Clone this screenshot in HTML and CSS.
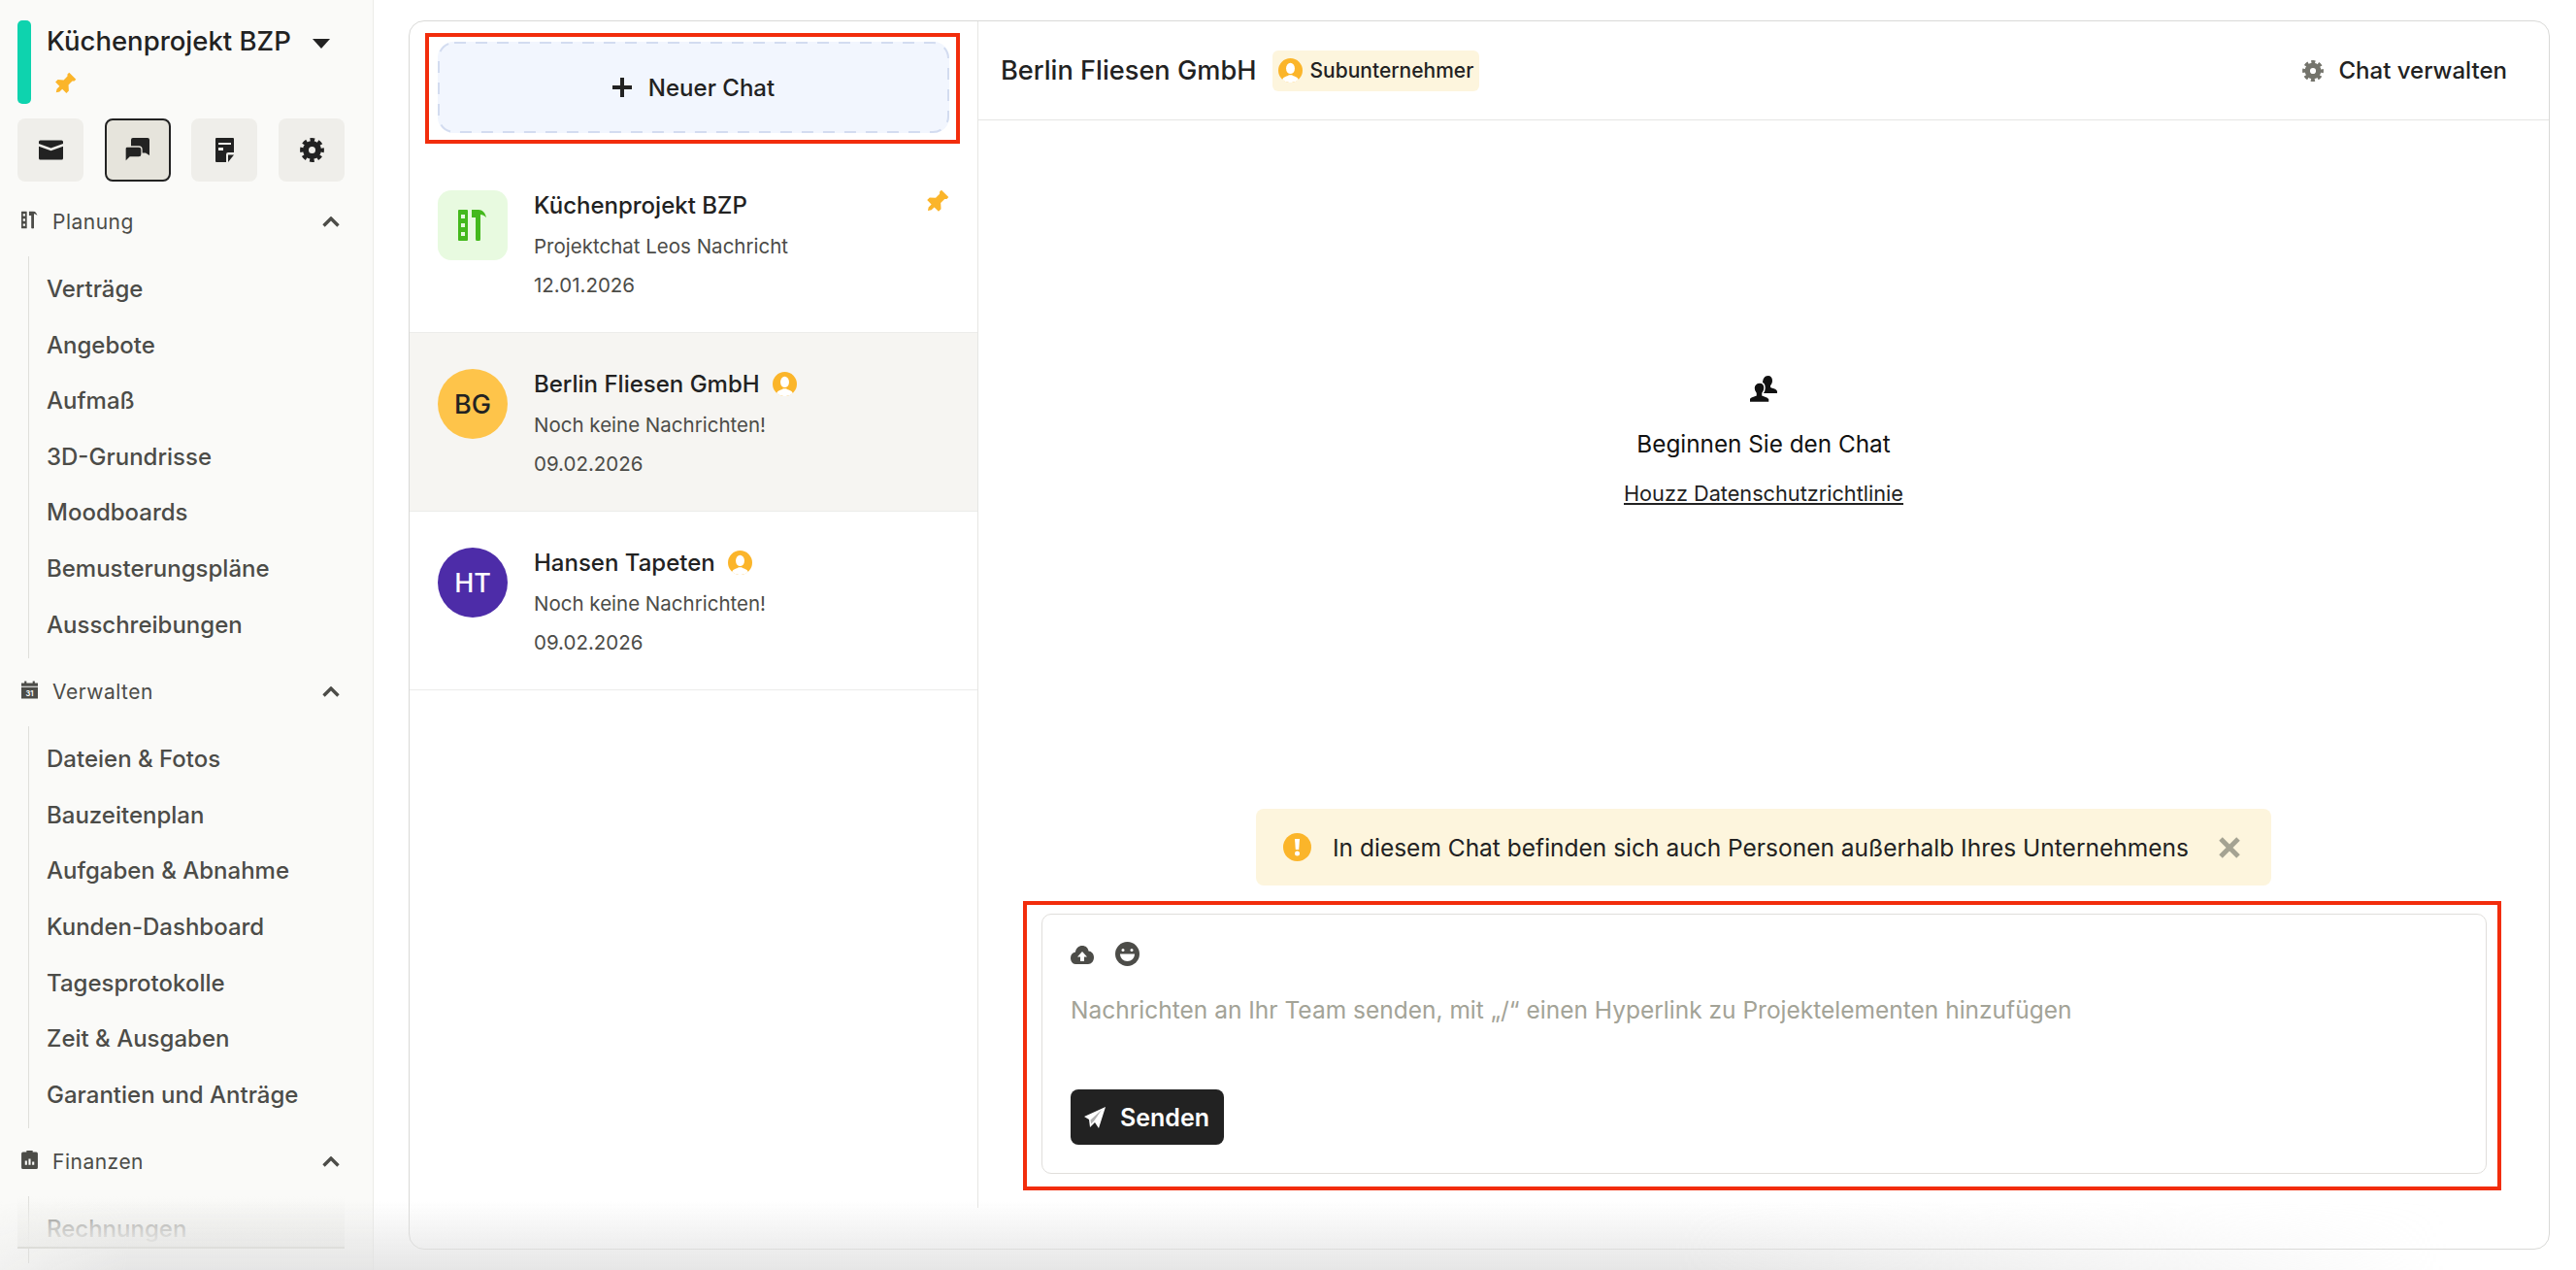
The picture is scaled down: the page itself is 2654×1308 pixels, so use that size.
FILE: index.html
```html
<!DOCTYPE html>
<html lang="de">
<head>
    <meta charset="UTF-8">
    <title>Küchenprojekt BZP - Chat</title>
    <link rel="stylesheet" href="styles.css">
</head>
<body>
    <svg class="defs" width="0" height="0">
        <symbol id="i-gear" viewBox="0 0 25 25">
            <circle cx="12.5" cy="12.5" r="6.5" fill="none" stroke="currentColor" stroke-width="6"/>
            <circle cx="12.5" cy="12.5" r="10.4" fill="none" stroke="currentColor" stroke-width="4" stroke-dasharray="4.6 3.57" stroke-dashoffset="2.3"/>
        </symbol>
        <symbol id="i-pin" viewBox="0 0 24 24">
            <path fill="#fbb52a" transform="rotate(45 12 12)" d="M7 1h10v2.500L15.500 5v5.500l4.500 4V18h-6v4l-2 3-2-3v-4H4v-3.500l4.500-4V5L7 3.500z"/>
        </symbol>
        <symbol id="i-user" viewBox="0 0 24 24">
            <circle cx="12" cy="12" r="12" fill="#fbb52a"/>
            <ellipse cx="12" cy="10" rx="4.300" ry="5.400" fill="#fff"/>
            <path fill="#fff" d="M4 21c1-3 5-3 6.500-4.500h3C15 18 19 18 20 21a12 12 0 0 1-16 0z"/>
        </symbol>
        <symbol id="i-tools" viewBox="0 0 30 32">
            <path fill="currentColor" fill-rule="evenodd" d="M1 0h8a1 1 0 0 1 1 1v30a1 1 0 0 1-1 1H1a1 1 0 0 1-1-1V1a1 1 0 0 1 1-1zM3 5v4h4V5zm0 9v4h4v-4zm0 9v4h4v-4z"/>
            <path fill="currentColor" d="M14 0h7c4 0 7 3 8 8-2-2-4-3-6-3v25a2.500 2.500 0 0 1-5 0V8h-4z"/>
        </symbol>
        <symbol id="i-chevron" viewBox="0 0 18 11">
            <path fill="none" stroke="currentColor" stroke-width="3.400" d="M1.500 9.500L9 2l7.500 7.500"/>
        </symbol>
    </svg>

    <aside class="sidebar">
        <div class="project">
            <span class="project-bar"></span>
            <div class="project-info">
                <div class="project-name">
                    <span>Küchenprojekt BZP</span>
                    <svg class="caret" viewBox="0 0 18 10"><path fill="currentColor" d="M0 0h18L9 10z"/></svg>
                </div>
                <svg class="project-pin"><use href="#i-pin"/></svg>
            </div>
        </div>

        <div class="tabs">
            <button class="tab">
                <svg viewBox="0 0 25 20"><path fill="currentColor" d="M1.500 0h22A1.500 1.500 0 0 1 25 1.500v2L12.500 8 0 3.500v-2A1.500 1.500 0 0 1 1.500 0zM0 6.200l12.500 4.500L25 6.200v12.300a1.500 1.500 0 0 1-1.500 1.500h-22A1.500 1.500 0 0 1 0 18.500z"/></svg>
            </button>
            <button class="tab active">
                <svg viewBox="0 0 25 25"><path fill="currentColor" d="M8 0h15a2 2 0 0 1 2 2v16l-4-2.500H8a2 2 0 0 1-2-2V2a2 2 0 0 1 2-2z"/><path fill="currentColor" stroke="#e6e4dc" stroke-width="1.300" d="M2 9h12a3 3 0 0 1 3 3v5a3 3 0 0 1-3 3H5l-5 5V11a2 2 0 0 1 2-2z"/></svg>
            </button>
            <button class="tab">
                <svg viewBox="0 0 19 25"><path fill="currentColor" fill-rule="evenodd" d="M1 0h17a1 1 0 0 1 1 1v14h-6a2 2 0 0 0-2 2v8H1a1 1 0 0 1-1-1V1a1 1 0 0 1 1-1zm2 5v2h13V5zm0 5v3h5v-3z"/><path fill="currentColor" d="M13 17.500h6L13 25z"/></svg>
            </button>
            <button class="tab">
                <svg class="tab-gear"><use href="#i-gear"/></svg>
            </button>
        </div>

        <div class="nav-group">
            <div class="nav-head">
                <svg class="nav-icon" viewBox="0 0 30 32"><use href="#i-tools"/></svg>
                <span class="nav-label">Planung</span>
                <svg class="chevron"><use href="#i-chevron"/></svg>
            </div>
            <ul class="nav-list">
                <li>Verträge</li>
                <li>Angebote</li>
                <li>Aufmaß</li>
                <li>3D-Grundrisse</li>
                <li>Moodboards</li>
                <li>Bemusterungspläne</li>
                <li>Ausschreibungen</li>
            </ul>
        </div>

        <div class="nav-group">
            <div class="nav-head">
                <svg class="nav-icon" viewBox="0 0 16 17"><path fill="currentColor" d="M3 0h2v2h6V0h2v2h3v3H0V2h3zM0 6h16v11H0z"/><text x="8" y="14.500" class="cal-num">31</text></svg>
                <span class="nav-label">Verwalten</span>
                <svg class="chevron"><use href="#i-chevron"/></svg>
            </div>
            <ul class="nav-list">
                <li>Dateien &amp; Fotos</li>
                <li>Bauzeitenplan</li>
                <li>Aufgaben &amp; Abnahme</li>
                <li>Kunden-Dashboard</li>
                <li>Tagesprotokolle</li>
                <li>Zeit &amp; Ausgaben</li>
                <li>Garantien und Anträge</li>
            </ul>
        </div>

        <div class="nav-group">
            <div class="nav-head">
                <svg class="nav-icon" viewBox="0 0 16 18"><path fill="currentColor" fill-rule="evenodd" d="M5 0h6v1.500h3.500A1.500 1.500 0 0 1 16 3v13.500a1.500 1.500 0 0 1-1.500 1.500h-13A1.500 1.500 0 0 1 0 16.500V3a1.500 1.500 0 0 1 1.500-1.500H5zM3.500 10v4h2v-4zm3.500-2v6h2V8zm3.500 3v3h2v-3z"/></svg>
                <span class="nav-label">Finanzen</span>
                <svg class="chevron"><use href="#i-chevron"/></svg>
            </div>
            <ul class="nav-list">
                <li>Rechnungen</li>
            </ul>
        </div>

        <div class="sidebar-fade"></div>
    </aside>

    <main class="main">
        <div class="panel">
            <section class="chat-list">
                <div class="new-chat-wrap">
                    <button class="new-chat">
                        <svg class="dash" viewBox="0 0 527 94"><rect x="1" y="1" width="525" height="92" rx="16" ry="16"/></svg>
                        <svg class="plus" viewBox="0 0 20 20"><path fill="currentColor" d="M8 0h4v8h8v4h-8v8H8v-8H0V8h8z"/></svg>
                        <span>Neuer Chat</span>
                    </button>
                </div>

                <div class="chat-item">
                    <div class="avatar avatar-project">
                        <svg viewBox="0 0 30 32"><use href="#i-tools"/></svg>
                    </div>
                    <div class="chat-text">
                        <div class="chat-title">Küchenprojekt BZP</div>
                        <div class="chat-sub">Projektchat Leos Nachricht</div>
                        <div class="chat-date">12.01.2026</div>
                    </div>
                    <svg class="item-pin"><use href="#i-pin"/></svg>
                </div>

                <div class="chat-item selected">
                    <div class="avatar avatar-yellow">BG</div>
                    <div class="chat-text">
                        <div class="chat-title">Berlin Fliesen GmbH <svg class="user-icon"><use href="#i-user"/></svg></div>
                        <div class="chat-sub">Noch keine Nachrichten!</div>
                        <div class="chat-date">09.02.2026</div>
                    </div>
                </div>

                <div class="chat-item">
                    <div class="avatar avatar-purple">HT</div>
                    <div class="chat-text">
                        <div class="chat-title">Hansen Tapeten <svg class="user-icon"><use href="#i-user"/></svg></div>
                        <div class="chat-sub">Noch keine Nachrichten!</div>
                        <div class="chat-date">09.02.2026</div>
                    </div>
                </div>
            </section>

            <section class="chat-view">
                <header class="chat-head">
                    <h2>Berlin Fliesen GmbH</h2>
                    <span class="role-badge"><svg class="user-icon"><use href="#i-user"/></svg>Subunternehmer</span>
                    <a class="manage">
                        <svg class="manage-gear"><use href="#i-gear"/></svg>
                        <span>Chat verwalten</span>
                    </a>
                </header>

                <div class="chat-body">
                    <svg class="people" viewBox="0 0 28 27">
                        <path fill="#111" d="M18.500 0c3 0 4.500 2 4.500 5 0 2.500-1 4-2 5v2c2 1 6 1 7 4v2H14v-6c-1-2-1-3-1-4 0-5 2-8 5.500-8z"/>
                        <path fill="#111" stroke="#fff" stroke-width="1.500" d="M10 7c3.500 0 5 2.500 5 5.500 0 2.500-1 4.500-2 5.500v2c2 1 6 1.500 7 4v3.500H-1V24c1-2.500 5-3 7-4v-2c-1-1-2-3-2-5.500C4 9.500 6.500 7 10 7z"/>
                    </svg>
                    <div class="empty-title">Beginnen Sie den Chat</div>
                    <a class="privacy">Houzz Datenschutzrichtlinie</a>
                </div>

                <div class="notice">
                    <svg class="notice-icon" viewBox="0 0 29 29"><circle cx="14.500" cy="14.500" r="14.500" fill="#fbb52a"/><path fill="#fff" d="M12 6h5l-.8 11h-3.400z"/><circle cx="14.500" cy="21" r="2.500" fill="#fff"/></svg>
                    <span>In diesem Chat befinden sich auch Personen außerhalb Ihres Unternehmens</span>
                    <svg class="notice-close" viewBox="0 0 22 22"><path fill="none" stroke="currentColor" stroke-width="5" d="M2 2l18 18M20 2L2 20"/></svg>
                </div>

                <div class="composer">
                    <div class="composer-tools">
                        <svg class="tool-cloud" viewBox="0 0 24 20"><path fill="#4c4c48" d="M12 0c3.500 0 6 2.200 6.500 5.500 3 .3 5.500 2.600 5.500 6.500 0 4-2.500 7-6 7H5c-3 0-5-3-5-6.500C0 9.500 2 7 5 6.500 5.500 2.500 8.500 0 12 0z"/><path fill="#fff" d="M12 6l5 5.500h-3V16h-4v-4.500H7z"/></svg>
                        <svg class="tool-smile" viewBox="0 0 25 25"><circle cx="12.500" cy="12.500" r="12.500" fill="#4c4c48"/><circle cx="8" cy="8.500" r="1.500" fill="#fff"/><circle cx="17" cy="8.500" r="1.500" fill="#fff"/><path fill="#fff" d="M5 12.500h15c0 4.500-3.500 7.500-7.500 7.500S5 17 5 12.500z"/></svg>
                    </div>
                    <div class="composer-input">Nachrichten an Ihr Team senden, mit „/“ einen Hyperlink zu Projektelementen hinzufügen</div>
                    <button class="send">
                        <svg viewBox="0 0 22 22"><path fill="#fff" d="M22 0L15 22l-4-6-5 5-1-8-5-3z"/><path fill="#222" d="M18 3L6.500 13.500l.7 4 3.300-3.500z" opacity=".35"/></svg>
                        <span>Senden</span>
                    </button>
                </div>
            </section>
        </div>
        <div class="bottom-shade"></div>
    </main>

    <!-- rote Markierungen -->
    <div class="mark mark-new"></div>
    <div class="mark mark-composer"></div>
</body>
</html>
```

FILE: styles.css
```css
* {
    box-sizing: border-box;
}
html, body {
    height: 100%;
}
body {
    margin: 0;
    display: flex;
    overflow: hidden;
    position: relative;
    background: #fff;
    color: #222;
    font-family: "Inter", "Liberation Sans", sans-serif;
}
button {
    font-family: inherit;
    border: none;
    cursor: pointer;
}
.defs {
    position: absolute;
}

/* Sidebar */
.sidebar {
    width: 385px;
    flex: none;
    height: 100%;
    position: relative;
    overflow: hidden;
    padding: 21px 29px 0 18px;
    background: #fafaf8;
    border-right: 1px solid #ebebe8;
}
.project {
    display: flex;
    gap: 16px;
}
.project-bar {
    width: 14px;
    height: 86px;
    border-radius: 5px;
    background: #0ed3ae;
}
.project-name {
    display: flex;
    align-items: center;
    gap: 22px;
    height: 42px;
    font-size: 27.500px;
    font-weight: 500;
    white-space: nowrap;
}
.caret {
    width: 18px;
    height: 10px;
    margin-top: 6px;
}
.project-pin {
    display: block;
    width: 24px;
    height: 24px;
    margin: 11px 0 0 7px;
}
.tabs {
    display: grid;
    grid-template-columns: repeat(4, 68px);
    gap: 21.700px;
    margin-top: 15px;
}
.tab {
    height: 65px;
    padding: 0;
    border-radius: 8px;
    background: #efeeea;
    color: #222;
    display: flex;
    align-items: center;
    justify-content: center;
}
.tab svg {
    width: 25px;
    height: 25px;
}
.tab.active {
    background: #e6e4dc;
    border: 2px solid #222;
}
.nav-group {
    margin-top: 21px;
}
.nav-group + .nav-group {
    margin-top: 14px;
}
.nav-head {
    height: 40px;
    display: flex;
    align-items: center;
    color: #4c4c48;
}
.nav-icon {
    width: 17px;
    height: 19px;
    margin: 0 0 4px 4px;
    flex: none;
}
.nav-label {
    margin-left: 15px;
    font-size: 21px;
    letter-spacing: 0.5px;
    flex: 1;
}
.cal-num {
    fill: #fafaf8;
    font-size: 7px;
    font-weight: 700;
    text-anchor: middle;
}
.chevron {
    width: 18px;
    height: 11px;
    margin-right: 5px;
}
.nav-list {
    list-style: none;
    margin: 16px 0 0 11px;
    padding: 5px 0 6px 18px;
    border-left: 1px solid #dfdfdb;
}
.nav-list li {
    height: 57.600px;
    line-height: 57.600px;
    font-size: 24px;
    font-weight: 500;
    color: #4c4c48;
    white-space: nowrap;
}
.sidebar-fade {
    position: absolute;
    left: 18px;
    right: 29px;
    top: 1232px;
    height: 54px;
    background: linear-gradient(to bottom, rgba(242, 242, 239, 0), rgba(242, 242, 239, .65) 55%, rgba(242, 242, 239, .97));
    border-bottom: 2px solid #dcdcd6;
}

/* Panel */
.main {
    flex: 1;
    min-width: 0;
    height: 100%;
    padding: 21px 27px 21px 36px;
}
.panel {
    height: 100%;
    display: flex;
    align-items: flex-start;
    border: 1px solid #d9d9d7;
    border-radius: 16px;
    overflow: hidden;
    background: #fff;
}

/* Chatliste */
.chat-list {
    width: 586px;
    height: 1222px;
    flex: none;
    border-right: 1px solid #e6e6e4;
}
.new-chat-wrap {
    padding: 21px 29px 22px;
}
.new-chat {
    position: relative;
    width: 527px;
    height: 94px;
    background: #f2f6fe;
    border-radius: 16px;
    color: #222;
    font-size: 24px;
    font-weight: 500;
    display: flex;
    align-items: center;
    justify-content: center;
    gap: 17px;
}
.dash {
    position: absolute;
    inset: 0;
    width: 100%;
    height: 100%;
}
.dash rect {
    fill: none;
    stroke: #d3dcf0;
    stroke-width: 2;
    stroke-dasharray: 12 10;
}
.plus {
    width: 20px;
    height: 20px;
}
.chat-item {
    height: 184px;
    display: flex;
    align-items: flex-start;
    padding: 32px 29px 0;
    border-bottom: 1px solid #ececea;
}
.chat-item.selected {
    background: #f6f5f2;
}
.avatar {
    width: 72px;
    height: 72px;
    margin-top: 5px;
    margin-right: 27px;
    flex: none;
    border-radius: 50%;
    display: flex;
    align-items: center;
    justify-content: center;
    font-size: 27px;
    font-weight: 500;
}
.avatar-project {
    border-radius: 14px;
    background: #e8fae0;
    color: #44b91d;
}
.avatar-project svg {
    width: 30px;
    height: 32px;
}
.avatar-yellow {
    background: #fec44a;
    color: #222;
}
.avatar-purple {
    background: #4d2ca8;
    color: #fff;
}
.chat-title {
    display: flex;
    align-items: center;
    gap: 13px;
    height: 40px;
    font-size: 24px;
    font-weight: 500;
}
.user-icon {
    width: 25px;
    height: 25px;
    flex: none;
}
.chat-sub,
.chat-date {
    height: 40px;
    line-height: 40px;
    font-size: 20.500px;
    color: #4c4c48;
}
.chat-sub {
    margin-top: 3px;
}
.item-pin {
    width: 25px;
    height: 25px;
    margin: 4px 0 0 auto;
}

/* Chatbereich */
.chat-view {
    flex: 1;
    min-width: 0;
    height: 100%;
    display: flex;
    flex-direction: column;
}
.chat-head {
    height: 102px;
    flex: none;
    display: flex;
    align-items: center;
    padding: 0 43px 0 23px;
    border-bottom: 1px solid #e6e6e4;
}
.chat-head h2 {
    margin: 0;
    font-size: 27.200px;
    font-weight: 500;
}
.role-badge {
    display: flex;
    align-items: center;
    gap: 8px;
    height: 42px;
    margin-left: 16px;
    padding: 0 6px;
    border-radius: 6px;
    background: #fdf5dd;
    font-size: 21px;
    font-weight: 500;
}
.manage {
    margin-left: auto;
    display: flex;
    align-items: center;
    gap: 15px;
    font-size: 24px;
    font-weight: 500;
}
.manage-gear {
    width: 22px;
    height: 22px;
    color: #74746c;
}
.chat-body {
    flex: 1;
    display: flex;
    flex-direction: column;
    align-items: center;
    padding-top: 263px;
}
.people {
    width: 28px;
    height: 27px;
}
.empty-title {
    margin-top: 27px;
    font-size: 24.300px;
    line-height: 32px;
    color: #111;
}
.privacy {
    margin-top: 19px;
    font-size: 21.700px;
    line-height: 32px;
    color: #222;
    text-decoration: underline;
}
.notice {
    align-self: center;
    width: 1046px;
    height: 79px;
    flex: none;
    display: flex;
    align-items: center;
    padding: 0 32px 0 28px;
    border-radius: 8px;
    background: #fdf5dd;
    font-size: 24.500px;
    color: #222;
}
.notice-icon {
    width: 29px;
    height: 29px;
    margin-right: 22px;
}
.notice-close {
    width: 22px;
    height: 22px;
    margin-left: auto;
    color: #a5a392;
}
.composer {
    flex: none;
    height: 268px;
    margin: 29px 64px 77px 65px;
    padding: 28px 29px 0;
    border: 1px solid #e0dedb;
    border-radius: 10px;
}
.composer-tools {
    display: flex;
    align-items: center;
    gap: 22px;
    height: 25px;
}
.tool-cloud {
    width: 24px;
    height: 20px;
    margin-top: 3px;
}
.tool-smile {
    width: 25px;
    height: 25px;
}
.composer-input {
    margin-top: 25px;
    height: 40px;
    line-height: 40px;
    font-size: 24.500px;
    color: #a3a397;
    white-space: nowrap;
}
.send {
    margin-top: 62px;
    width: 158px;
    height: 57px;
    border-radius: 8px;
    background: #222;
    color: #fff;
    font-size: 25px;
    font-weight: 600;
    display: flex;
    align-items: center;
    gap: 15px;
    padding: 0 0 0 14px;
}
.send svg {
    width: 22px;
    height: 22px;
}

/* Überlagerungen */
.bottom-shade {
    position: absolute;
    left: 0;
    right: 0;
    bottom: 0;
    height: 72px;
    pointer-events: none;
    background: linear-gradient(to bottom, rgba(224, 224, 224, 0), rgba(224, 224, 224, .8));
    -webkit-mask-image: linear-gradient(to right, rgba(0, 0, 0, .4), #000 5%, #000 65%, transparent 95%);
    mask-image: linear-gradient(to right, rgba(0, 0, 0, .4), #000 5%, #000 65%, transparent 95%);
}
.mark {
    position: absolute;
    border: 4px solid #f22d0c;
    pointer-events: none;
}
.mark-new {
    left: 438px;
    top: 34px;
    width: 551px;
    height: 114px;
}
.mark-composer {
    left: 1054px;
    top: 928px;
    width: 1523px;
    height: 298px;
}
```
